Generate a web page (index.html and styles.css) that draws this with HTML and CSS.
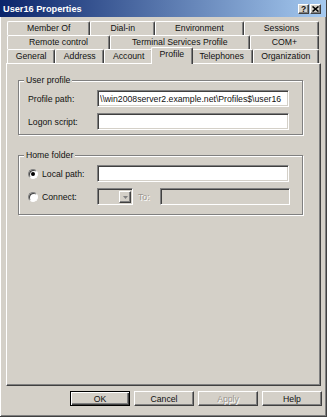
FILE: index.html
```html
<!DOCTYPE html>
<html>
  <head>
    <title>User16 Properties</title>
    <link rel="stylesheet" href="styles.css">
  </head>
  <body>
    <div class="window">
      <div class="titlebar">
        <span class="title">User16 Properties</span>
        <div class="caption-buttons">
          <span class="cap-button help-button">?</span>
          <span class="cap-button">
            <svg width="7" height="6" viewBox="0 0 7 6">
              <path d="M0.5 0.5 L6.5 5.5 M6.5 0.5 L0.5 5.5" stroke="#000" stroke-width="1.6" fill="none"/>
            </svg>
          </span>
        </div>
      </div>

      <div class="dialog-body">
        <div class="tab-strip">
          <div class="tab-row">
            <span class="tab">Member Of</span>
            <span class="tab">Dial-in</span>
            <span class="tab">Environment</span>
            <span class="tab">Sessions</span>
          </div>
          <div class="tab-row">
            <span class="tab">Remote control</span>
            <span class="tab">Terminal Services Profile</span>
            <span class="tab">COM+</span>
          </div>
          <div class="tab-row">
            <span class="tab">General</span>
            <span class="tab">Address</span>
            <span class="tab">Account</span>
            <span class="tab tab-active">Profile</span>
            <span class="tab">Telephones</span>
            <span class="tab">Organization</span>
          </div>
        </div>

        <div class="panel">
          <div class="group group-profile">
            <span class="group-label">User profile</span>
            <div class="group-body">
              <div class="field-row">
                <span class="field-label">Profile path:</span>
                <input class="textbox" type="text" value="\\win2008server2.example.net\Profiles$\user16">
              </div>
              <div class="field-row">
                <span class="field-label">Logon script:</span>
                <input class="textbox" type="text" value="">
              </div>
            </div>
          </div>

          <div class="group group-home">
            <span class="group-label">Home folder</span>
            <div class="group-body">
              <div class="field-row">
                <span class="radio radio-checked"></span>
                <span class="radio-label">Local path:</span>
                <input class="textbox" type="text" value="">
              </div>
              <div class="field-row">
                <span class="radio"></span>
                <span class="radio-label">Connect:</span>
                <span class="combo">
                  <span class="combo-arrow">
                    <svg width="5" height="3" viewBox="0 0 5 3">
                      <path d="M0 0 H5 L2.5 3 Z" fill="#808080"/>
                    </svg>
                  </span>
                </span>
                <span class="to-label">To:</span>
                <input class="textbox textbox-short" type="text" value="" disabled>
              </div>
            </div>
          </div>
        </div>

        <div class="button-row">
          <button class="dialog-button default-button">OK</button>
          <button class="dialog-button">Cancel</button>
          <button class="dialog-button" disabled>Apply</button>
          <button class="dialog-button">Help</button>
        </div>
      </div>
    </div>
  </body>
</html>
```

FILE: styles.css
```css
body {
  margin: 0;
  font-family: "Liberation Sans", Arial, sans-serif;
  font-size: 8.7px;
  color: #111;
  background-color: #d4d0c8;
}
.window {
  width: 327px;
  height: 417px;
  box-sizing: border-box;
  background-color: #d4d0c8;
  border-right: 1px solid #404040;
  border-bottom: 1px solid #404040;
  box-shadow: inset 1px 0 0 white, inset -1px -1px 0 #808080;
}
.titlebar {
  height: 17px;
  display: flex;
  align-items: center;
  justify-content: space-between;
  padding: 0 5px 0 3px;
  background: linear-gradient(to right, #0a246a, #a6caf0);
}
.title {
  color: white;
  font-weight: bold;
  font-size: 9.2px;
}
.caption-buttons {
  display: flex;
  gap: 1px;
}
.cap-button {
  width: 11px;
  height: 10px;
  box-sizing: border-box;
  display: flex;
  align-items: center;
  justify-content: center;
  background-color: #d4d0c8;
  border-top: 1px solid white;
  border-left: 1px solid white;
  border-right: 1px solid #404040;
  border-bottom: 1px solid #404040;
  box-shadow: inset -1px -1px 0 #808080;
}
.help-button {
  font-weight: bold;
  font-size: 8.5px;
  line-height: 8px;
}
.dialog-body {
  padding: 4px 5px 0 6px;
}
.tab-strip {
  margin: 0 2px 0 1px;
}
.tab-row {
  display: flex;
  height: 14px;
}
.tab {
  flex: 1 1 auto;
  box-sizing: border-box;
  height: 14px;
  line-height: 13px;
  text-align: center;
  white-space: nowrap;
  background-color: #d4d0c8;
  border-top: 1px solid white;
  border-left: 1px solid white;
  border-right: 1px solid #404040;
  border-radius: 2px 2px 0 0;
  box-shadow: inset -1px 0 0 #808080;
}
.tab-active {
  position: relative;
  z-index: 1;
  height: 17px;
  margin: -2px -2px -1px;
  line-height: 13px;
}
.panel {
  height: 323px;
  box-sizing: border-box;
  padding: 16px 0 0 11px;
  border-top: 1px solid white;
  border-left: 1px solid white;
  border-right: 1px solid #404040;
  border-bottom: 1px solid #404040;
  box-shadow: inset -1px -1px 0 #808080;
}
.group {
  width: 285px;
  box-sizing: border-box;
  border: 1px solid #808080;
  box-shadow: inset 1px 1px 0 white, 1px 1px 0 white;
}
.group-label {
  display: table;
  height: 10px;
  line-height: 10px;
  margin: -6px 0 0 5px;
  padding: 0 2px;
  background-color: #d4d0c8;
}
.group-body {
  display: flex;
  flex-direction: column;
  gap: 6px;
  padding: 5px 0 4px 9px;
}
.group-home {
  margin-top: 20px;
}
.group-home .group-body {
  padding-bottom: 9px;
}
.field-row {
  display: flex;
  align-items: center;
  height: 17px;
}
.field-label {
  width: 69px;
}
.textbox {
  width: 192px;
  height: 17px;
  box-sizing: border-box;
  margin: 0;
  padding: 0 0 0 2px;
  font-family: "Liberation Sans", Arial, sans-serif;
  font-size: 8.7px;
  color: #111;
  background-color: white;
  border-top: 1px solid #808080;
  border-left: 1px solid #808080;
  border-right: 1px solid white;
  border-bottom: 1px solid white;
  box-shadow: inset 1px 1px 0 #404040, inset -1px -1px 0 #d4d0c8;
  outline: none;
}
.textbox-short {
  width: 130px;
  background-color: #d4d0c8;
}
.radio {
  position: relative;
  width: 10px;
  height: 10px;
  box-sizing: border-box;
  margin-right: 4px;
  border-radius: 50%;
  background-color: white;
  border: 1px solid;
  border-color: #808080 white white #808080;
  box-shadow: inset 1px 1px 0 #404040;
}
.radio-checked::after {
  content: "";
  position: absolute;
  left: 2px;
  top: 2px;
  width: 4px;
  height: 4px;
  border-radius: 50%;
  background-color: black;
}
.radio-label {
  width: 55px;
}
.combo {
  width: 36px;
  height: 17px;
  box-sizing: border-box;
  display: flex;
  justify-content: flex-end;
  padding: 2px 1px 1px 0;
  background-color: #d4d0c8;
  border-top: 1px solid #808080;
  border-left: 1px solid #808080;
  border-right: 1px solid white;
  border-bottom: 1px solid white;
  box-shadow: inset 1px 1px 0 #404040;
}
.combo-arrow {
  width: 12px;
  box-sizing: border-box;
  display: flex;
  align-items: center;
  justify-content: center;
  background-color: #d4d0c8;
  border-top: 1px solid white;
  border-left: 1px solid white;
  border-right: 1px solid #404040;
  border-bottom: 1px solid #404040;
  box-shadow: inset -1px -1px 0 #808080;
}
.to-label {
  width: 22px;
  margin-left: 5px;
  color: #9a968f;
  text-shadow: 1px 1px 0 white;
}
.button-row {
  display: flex;
  justify-content: flex-end;
  gap: 4px;
  margin: 5px -1px 0 0;
}
.dialog-button {
  width: 60px;
  height: 15px;
  box-sizing: border-box;
  padding: 0;
  font-family: "Liberation Sans", Arial, sans-serif;
  font-size: 8.7px;
  color: #111;
  background-color: #d4d0c8;
  border-top: 1px solid white;
  border-left: 1px solid white;
  border-right: 1px solid #404040;
  border-bottom: 1px solid #404040;
  box-shadow: inset -1px -1px 0 #808080;
}
.default-button {
  border: 1px solid black;
  box-shadow: inset 1px 1px 0 white, inset -1px -1px 0 #404040, inset -2px -2px 0 #808080;
}
.dialog-button:disabled {
  color: #9a968f;
  text-shadow: 1px 1px 0 white;
}
```
